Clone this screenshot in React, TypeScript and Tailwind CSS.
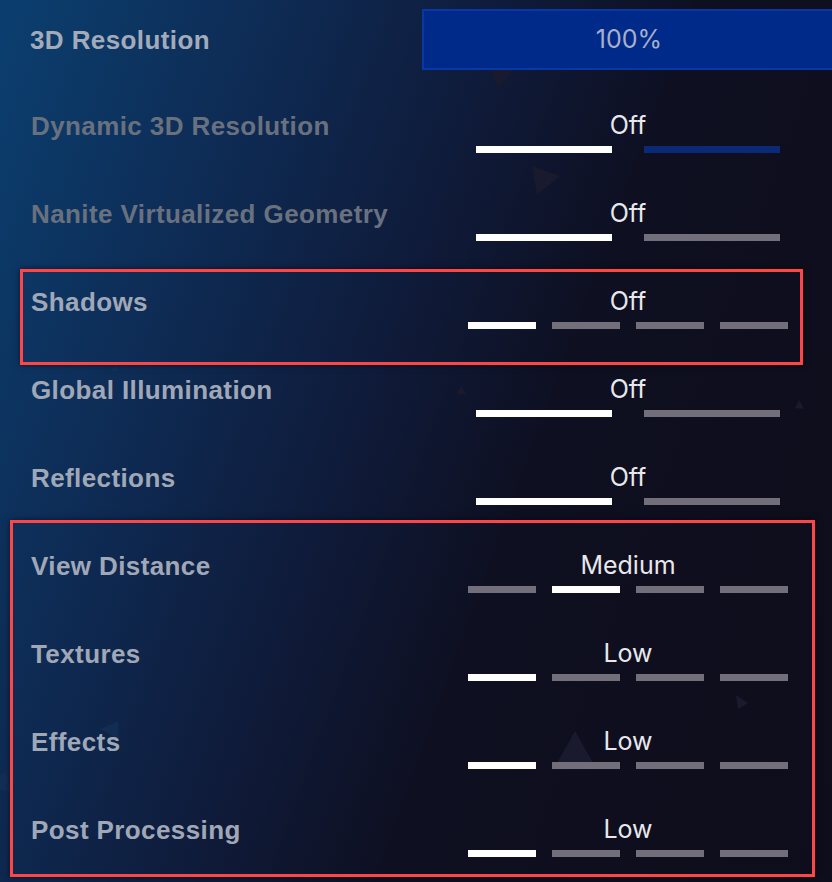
import React from "react";

type Row = {
  label: string;
  value: string;
  segments: 2 | 4;
  active: number;
  dim?: boolean;
  blueTrack?: boolean;
};

const rows: Row[] = [
  { label: "Dynamic 3D Resolution", value: "Off", segments: 2, active: 0, dim: true, blueTrack: true },
  { label: "Nanite Virtualized Geometry", value: "Off", segments: 2, active: 0, dim: true },
  { label: "Shadows", value: "Off", segments: 4, active: 0 },
  { label: "Global Illumination", value: "Off", segments: 2, active: 0 },
  { label: "Reflections", value: "Off", segments: 2, active: 0 },
  { label: "View Distance", value: "Medium", segments: 4, active: 1 },
  { label: "Textures", value: "Low", segments: 4, active: 0 },
  { label: "Effects", value: "Low", segments: 4, active: 0 },
  { label: "Post Processing", value: "Low", segments: 4, active: 0 },
];

const labelFont =
  "font-['Liberation_Sans',Arial,sans-serif] text-[26px] font-bold leading-[30px] tracking-[0.4px]";
const valueFont = "font-['Inter','Noto_Sans',sans-serif] text-[25px] leading-[29px]";

function Backdrop() {
  return (
    <svg className="pointer-events-none absolute inset-0" width="832" height="882" viewBox="0 0 832 882">
      <g fill="#1a1a2e">
        <polygon points="491,70 514,70 498,89" />
        <polygon points="532,166 560,176 537,195" />
        <polygon points="575,731 557,763 593,763" />
        <polygon points="736,695 748,703 738,709" />
        <polygon points="461,386 466,394 456,394" />
        <polygon points="799,400 804,409 795,408" />
      </g>
      <g fill="#163259" opacity="0.6">
        <polygon points="100,729 118,721 119,740" />
        <polygon points="0,776 7,770 10,791 0,790" />
        <polygon points="115,364 119,371 111,371" />
      </g>
    </svg>
  );
}

function Segments({ row }: { row: Row }) {
  const wide = row.segments === 2;
  return (
    <div className={wide ? "mt-[6px] flex gap-[32px]" : "mt-[6px] flex gap-[16px]"}>
      {Array.from({ length: row.segments }).map((_, i) => {
        let color = "bg-[#726f7b]";
        if (i === row.active) color = "bg-white";
        else if (row.blueTrack) color = "bg-[#0a2a78]";
        return <div key={i} className={`${wide ? "w-[136px]" : "w-[68px]"} h-[7px] ${color}`} />;
      })}
    </div>
  );
}

function SettingRow({ row }: { row: Row }) {
  return (
    <div className="grid h-[88px] grid-cols-[1fr_320px] pr-[44px]">
      <div
        className={`${labelFont} flex items-center pl-[31px] ${row.dim ? "text-[#69717f]" : "text-[#a0a8b7]"}`}
      >
        {row.label}
      </div>
      <div className="flex flex-col items-center pt-[29px]">
        <span className={`${valueFont} text-[#e8e8ec]`}>{row.value}</span>
        <Segments row={row} />
      </div>
    </div>
  );
}

export default function App() {
  return (
    <div className="relative h-[882px] w-[832px] overflow-hidden bg-[linear-gradient(110deg,#0b3f70_0%,#0e2b54_24%,#0f1b3a_44%,#0e0f20_62%,#0e0d1b_100%)]">
      <Backdrop />

      <div className="relative flex flex-col">
        <div className="flex h-[82px] items-start">
          <div className={`${labelFont} mb-[12px] flex h-[61px] flex-1 items-center self-end pl-[30px] text-[#a3abba]`}>
            3D Resolution
          </div>
          <div className="mt-[9px] mr-[-2px] flex h-[61px] w-[412px] shrink-0 items-center justify-center border-y-2 border-l-2 border-[#0a37a6] bg-[#002a8a]">
            <span className={`${valueFont} text-[#a8b0c9]`}>100%</span>
          </div>
        </div>

        {rows.map((row) => (
          <SettingRow key={row.label} row={row} />
        ))}
      </div>

      <div className="absolute left-[20px] top-[269px] h-[96px] w-[783px] border-[3px] border-[#ff4545] shadow-[0_0_6px_rgba(0,0,0,0.55)]" />
      <div className="absolute left-[10px] top-[520px] h-[357px] w-[805px] border-[3px] border-[#ff4545] shadow-[0_0_6px_rgba(0,0,0,0.55)]" />
    </div>
  );
}
